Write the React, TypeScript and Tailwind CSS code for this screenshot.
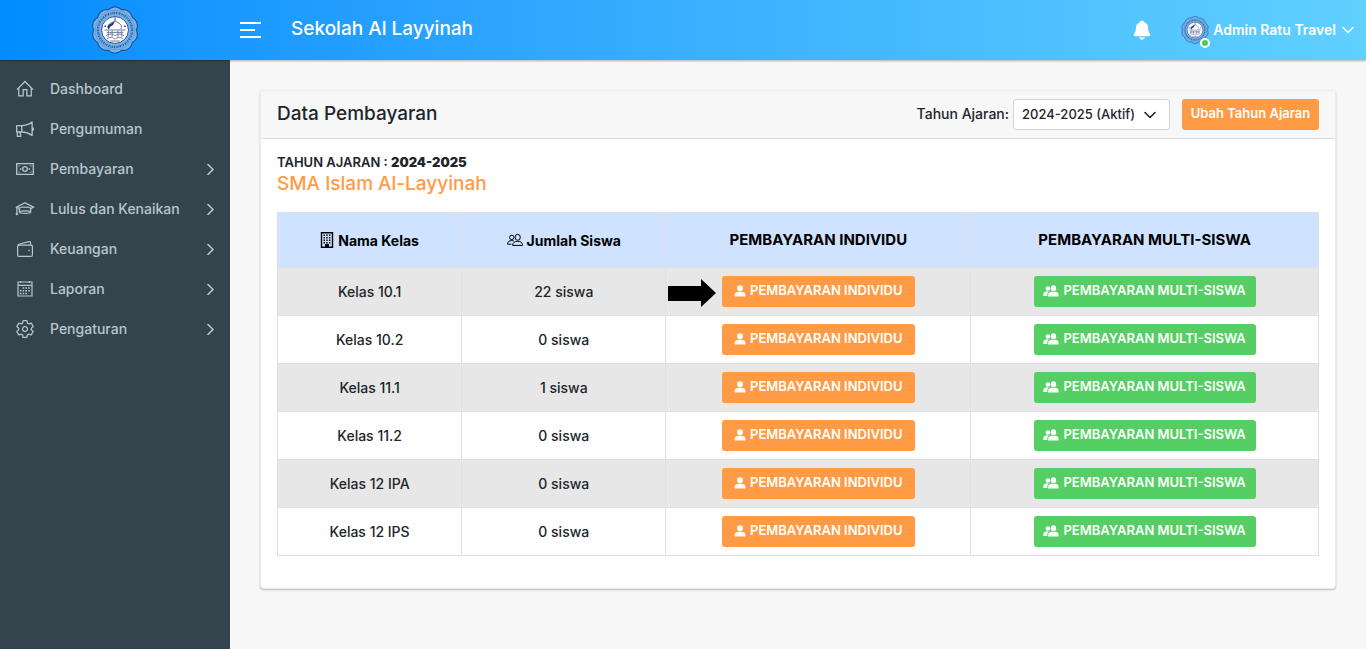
import React from "react";
import { LiaHomeSolid, LiaGraduationCapSolid } from "react-icons/lia";
import { IoSettingsOutline, IoNotifications } from "react-icons/io5";

type IconProps = { className?: string };

function Megaphone({ className }: IconProps) {
  return (
    <svg viewBox="0 0 20 20" className={className} fill="none" stroke="currentColor" strokeWidth="1.3" strokeLinejoin="round" aria-hidden="true">
      <path d="M1.7 6.6h4.8c4 0 7.5-1.2 10.6-3.6v13.6c-3.1-2.4-6.6-3.6-10.6-3.6H1.7zM6.8 6.6V13M2.4 13v4.4h3.4L5 13M17.1 8.4c1.8.4 1.8 2.8 0 3.2" />
    </svg>
  );
}

function Banknote({ className }: IconProps) {
  return (
    <svg viewBox="0 0 20 20" className={className} fill="none" stroke="currentColor" strokeWidth="1.3" aria-hidden="true">
      <path d="M1.7 4.7h16.6v10.6H1.7z" />
      <path d="M3.2 7.2c1 0 1.7-.4 1.9-1M16.8 7.2c-1 0-1.7-.4-1.9-1M3.2 12.8c1 0 1.7.4 1.9 1M16.8 12.8c-1 0-1.7.4-1.9 1" strokeWidth="0.8" />
      <circle cx="10" cy="10" r="2.3" />
      <path d="M4.8 10h1.6M13.6 10h1.6" strokeWidth="1.6" />
    </svg>
  );
}

function Wallet({ className }: IconProps) {
  return (
    <svg viewBox="0 0 20 20" className={className} fill="none" stroke="currentColor" strokeWidth="1.2" strokeLinejoin="round" aria-hidden="true">
      <rect x="2.6" y="6.2" width="14.8" height="11.2" rx="1.5" />
      <path d="M2.9 6.4c.2-.9.7-1.2 1.6-1.4L14 2.6c1-.2 1.5.2 1.5 1v2.6" />
      <circle cx="14" cy="11.6" r=".8" fill="currentColor" stroke="none" />
    </svg>
  );
}

function Calendar({ className }: IconProps) {
  return (
    <svg viewBox="0 0 20 20" className={className} fill="none" stroke="currentColor" strokeWidth="1.2" aria-hidden="true">
      <path d="M3 3h14v14H3zM3 6.3h14" />
      <path d="M5.6 2v2M14.4 2v2" />
      <path d="M7.6 9h8M4.8 11.8h10.8M4.8 14.5h8" strokeWidth="1.5" strokeDasharray="1.6 1.2" />
    </svg>
  );
}

function Building({ className }: IconProps) {
  return (
    <svg viewBox="0 0 14 16" className={className} fill="none" stroke="currentColor" aria-hidden="true">
      <path d="M1.5.8h11v14.4h-11z" strokeWidth="1.4" />
      <path d="M3.5 3.3h7M3.5 5.8h7M3.5 8.3h7M3.5 10.8h7" strokeWidth="1.4" strokeDasharray="1.5 1.2" />
      <path d="M5 12h4v3.2H5z" fill="currentColor" stroke="none" />
    </svg>
  );
}

function Users({ className }: IconProps) {
  return (
    <svg viewBox="0 0 16 14" className={className} fill="none" stroke="currentColor" strokeWidth="1" strokeLinejoin="round" aria-hidden="true">
      <circle cx="4.8" cy="4.4" r="2.2" />
      <ellipse cx="10.7" cy="4.3" rx="2.6" ry="3" />
      <path d="M5.6 12.4c.1-2.8 2-4.1 5.1-4.1s4.8 1.300 4.900 4.100zM.6 11.200h3.800M.6 11.200c0-2.500 1.500-3.600 4.200-3.600.8 0 1.400.1 2 .3" />
    </svg>
  );
}

function Person({ className }: IconProps) {
  return (
    <svg viewBox="0 0 12 12" className={className} fill="currentColor" aria-hidden="true">
      <ellipse cx="6" cy="3.3" rx="2.9" ry="3.1" />
      <path d="M.5 11.500V10c0-2 1.600-3 3.400-3h4.200c1.800 0 3.400 1 3.400 3v1.500z" />
    </svg>
  );
}

function People({ className }: IconProps) {
  return (
    <svg viewBox="0 0 16 12" className={className} fill="currentColor" aria-hidden="true">
      <circle cx="4.900" cy="3.500" r="2.300" />
      <path d="M.4 11V9.200c0-1.800 1.300-2.800 2.900-2.800h2.500c-1 .8-1.500 2-1.500 3.300V11z" />
      <ellipse cx="10.500" cy="3.200" rx="2.700" ry="2.900" />
      <path d="M5.200 11.500V9.900c0-2 1.500-3.200 3.300-3.200h3.800c1.800 0 3.300 1.200 3.300 3.200v1.600z" />
    </svg>
  );
}

function ChevronDown({ className }: IconProps) {
  return (
    <svg viewBox="0 0 12 12" className={className} fill="none" stroke="currentColor" strokeWidth="1.600" strokeLinecap="round" strokeLinejoin="round" aria-hidden="true">
      <path d="M1 3.500l5 5 5-5" />
    </svg>
  );
}

function ChevronRight({ className }: IconProps) {
  return (
    <svg viewBox="0 0 12 12" className={className} fill="none" stroke="currentColor" strokeWidth="1.600" strokeLinecap="round" strokeLinejoin="round" aria-hidden="true">
      <path d="M4 1.500l5 5-5 5" />
    </svg>
  );
}

const menu = [
  { label: "Dashboard", icon: LiaHomeSolid, sub: false },
  { label: "Pengumuman", icon: Megaphone, sub: false },
  { label: "Pembayaran", icon: Banknote, sub: true },
  { label: "Lulus dan Kenaikan", icon: LiaGraduationCapSolid, sub: true },
  { label: "Keuangan", icon: Wallet, sub: true },
  { label: "Laporan", icon: Calendar, sub: true },
  { label: "Pengaturan", icon: IoSettingsOutline, sub: true },
];

const classes = [
  ["Kelas 10.1", "22 siswa"],
  ["Kelas 10.2", "0 siswa"],
  ["Kelas 11.1", "1 siswa"],
  ["Kelas 11.2", "0 siswa"],
  ["Kelas 12 IPA", "0 siswa"],
  ["Kelas 12 IPS", "0 siswa"],
];

const rim = Array.from({ length: 181 }, (_, i) => {
  const a = (i / 180) * Math.PI * 2 - Math.PI / 2;
  const r = 44.5 + 3.5 * Math.abs(Math.sin(a * 5));
  return `${i ? "L" : "M"}${(50 + r * Math.cos(a)).toFixed(1)} ${(50 + r * Math.sin(a)).toFixed(1)}`;
}).join("") + "Z";

function Crest({ className }: IconProps) {
  return (
    <svg viewBox="0 0 100 100" className={className} aria-hidden="true">
      <path d={rim} fill="#76b4e8" stroke="#24519b" strokeWidth="2.5" />
      <circle cx="50" cy="50" r="41" fill="none" stroke="#4c86cc" strokeWidth="1" />
      <circle cx="50" cy="50" r="35.5" fill="none" stroke="#214a91" strokeWidth="5" strokeDasharray="2.600 1.400 1.400 1.400 3.200 2" opacity="0.75" />
      <circle cx="50" cy="50" r="28" fill="#fff" stroke="#254b96" strokeWidth="2" />
      <path d="M37 48c-6-10 5-12 13-17 8 5 17 8 12 17" fill="none" stroke="#4a5e9b" strokeWidth="1.800" />
      <path d="M37 49c-7-10 5-12 13-18-3 5-2 7-5 9-4 2-6 4-8 9z" fill="#203880" />
      <path d="M50 24v7" stroke="#273f88" strokeWidth="2" />
      <path d="M28 50h44M33 55h34M31 62c8-6 15-3 19 0 4-3 11-6 19 0M34 68c7-5 12-2 16 1 4-3 9-6 16-1M36 51v13M44 51v13M56 51v13M64 51v13M40 73h20" fill="none" stroke="#6b7aa2" strokeWidth="2" />
      <path d="M28 42h3M69 42h3" stroke="#253d80" strokeWidth="3" />
    </svg>
  );
}

const cell = "border border-[#dee2e6]";

export default function App() {
  return (
    <div className="flex min-h-screen flex-col bg-[#f7f7f7] font-['Inter','Liberation_Sans',sans-serif] text-[14px] font-medium text-[#212529]">
      <header className="relative z-10 flex h-[60px] items-center bg-linear-to-r from-[#008cff] to-[#60d0ff] text-white shadow-[0_1px_2px_rgba(0,0,0,0.3)]">
        <a href="#" aria-label="Beranda" className="flex w-[230px] justify-center">
          <Crest className="size-12" />
        </a>
        <button aria-label="Menu" className="ml-2.5 flex flex-col gap-[5px]">
          <span className="h-0.5 w-[21px] bg-white" />
          <span className="h-0.5 w-[15px] bg-white" />
          <span className="h-0.5 w-[21px] bg-white" />
        </button>
        <p className="ml-[30px] pb-0.5 text-[19px]">Sekolah Al Layyinah</p>
        <div className="ml-auto flex items-center pr-3">
          <button aria-label="Notifikasi" className="mr-[28px]">
            <IoNotifications className="size-[22px]" />
          </button>
          <button className="flex items-center gap-1 font-semibold">
            <span className="relative">
              <Crest className="size-7" />
              <span className="absolute -right-px -bottom-1 size-2.5 rounded-full border-2 border-white bg-[#4dca5b]" />
            </span>
            <span className="pb-0.5">Admin Ratu Travel</span>
            <ChevronDown className="ml-0.5 size-3" />
          </button>
        </div>
      </header>
      <div className="flex flex-1">
        <nav className="w-[230px] shrink-0 bg-[#34444c] pt-[9px] text-[#b8c7ce]">
          <ul>
            {menu.map(({ label, icon: Icon, sub }) => (
              <li key={label}>
                <a href="#" className="flex h-10 items-center pr-[14px] pl-[15px]">
                  <Icon className="size-5" />
                  <span className="ml-[15px] pb-0.5">{label}</span>
                  {sub && <ChevronRight className="ml-auto size-3" />}
                </a>
              </li>
            ))}
          </ul>
        </nav>
        <main className="min-w-0 flex-1 p-[30px]">
          <section className="rounded border border-[#ececec] bg-white pb-8 shadow-[0_1px_2px_rgba(0,0,0,0.25)]">
            <div className="flex h-12 items-center border-b border-[#dcdcdc] bg-[#f7f7f7] px-4">
              <h1 className="text-[19px]">Data Pembayaran</h1>
              <label htmlFor="year" className="mr-1 ml-auto pb-0.5">Tahun Ajaran:</label>
              <div className="relative">
                <select id="year" className="h-[31px] w-[157px] appearance-none rounded-[3px] border border-[#ced4da] bg-white px-2 text-[13px]">
                  <option>2024-2025 (Aktif)</option>
                </select>
                <ChevronDown className="pointer-events-none absolute top-[10px] right-[14px] size-3" />
              </div>
              <button className="ml-3 h-[31px] w-[137px] rounded-[3px] bg-[#ff9b44] pb-0.5 text-[13px] font-semibold text-white">Ubah Tahun Ajaran</button>
            </div>
            <div className="px-4 pt-[13px]">
              <p className="text-[13px] leading-5 font-semibold">TAHUN AJARAN : <b>2024-2025</b></p>
              <h2 className="text-[19px] leading-6 text-[#ff9b44]">SMA Islam Al-Layyinah</h2>
              <table className="mt-4 w-full table-fixed border-collapse text-center">
                <colgroup>
                  <col className="w-[17.7%]" />
                  <col className="w-[19.6%]" />
                  <col className="w-[29.3%]" />
                  <col className="w-[33.4%]" />
                </colgroup>
                <thead>
                  <tr className="h-[55px] bg-[#cfe2ff] text-black">
                    <th className={cell}><div className="flex items-center justify-center gap-1"><Building className="h-4 w-3.5" />Nama Kelas</div></th>
                    <th className={cell}><div className="flex items-center justify-center gap-1"><Users className="h-3.5 w-4" />Jumlah Siswa</div></th>
                    <th className={`${cell} text-[15px]`}>PEMBAYARAN INDIVIDU</th>
                    <th className={`${cell} text-[15px]`}>PEMBAYARAN MULTI-SISWA</th>
                  </tr>
                </thead>
                <tbody>
                  {classes.map(([name, count], i) => (
                    <tr key={name} className="h-12 bg-white odd:bg-[#e7e7e7]">
                      <td className={cell}>{name}</td>
                      <td className={cell}>{count}</td>
                      <td className={cell}>
                        <div className="relative mx-auto w-[193px]">
                          {i === 0 && (
                            <svg viewBox="0 0 48 28" className="absolute top-[3px] -left-[54px] h-7 w-12" aria-hidden="true">
                              <path d="M0 7h33V0l15 14-15 14v-6H0z" />
                            </svg>
                          )}
                          <button className="flex h-[31px] w-full items-center justify-center gap-1 rounded-[3px] bg-[#ff9b44] pb-0.5 text-[13px] font-semibold text-white">
                            <Person className="size-3" />PEMBAYARAN INDIVIDU
                          </button>
                        </div>
                      </td>
                      <td className={cell}>
                        <button className="mx-auto flex h-[31px] w-[222px] items-center justify-center gap-1 rounded-[3px] bg-[#55ce63] pb-0.5 text-[13px] font-semibold text-white">
                          <People className="h-3 w-4" />PEMBAYARAN MULTI-SISWA
                        </button>
                      </td>
                    </tr>
                  ))}
                </tbody>
              </table>
            </div>
          </section>
        </main>
      </div>
    </div>
  );
}
